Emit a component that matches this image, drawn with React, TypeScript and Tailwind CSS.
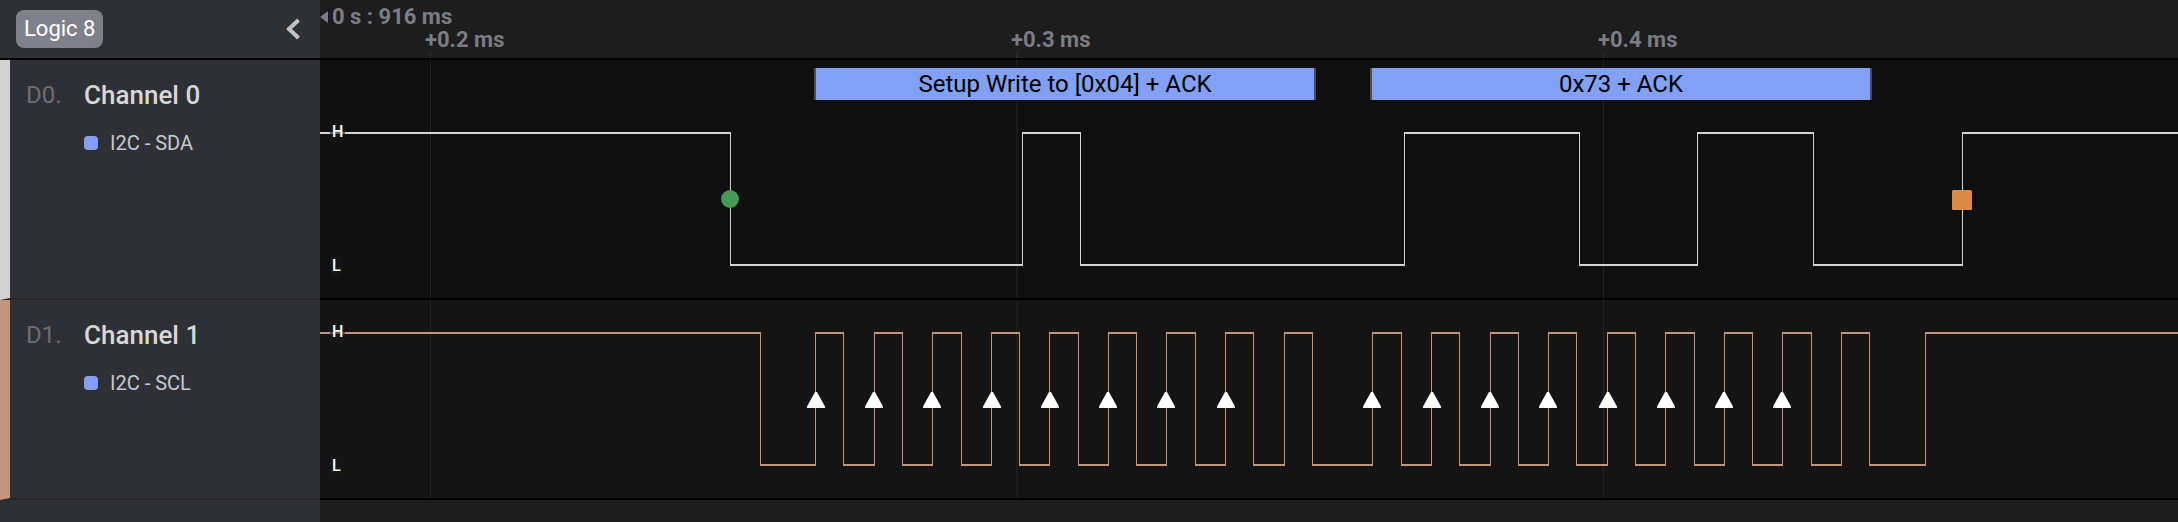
import React from "react";

const HIGH = 0;
const LOW = 132;
const FAR_RIGHT = 6000;

const ticks = [
  { label: "+0.2 ms", x: 110, width: 1 },
  { label: "+0.3 ms", x: 696, width: 2 },
  { label: "+0.4 ms", x: 1283, width: 1 },
];

const sdaEdges = [410, 702, 760, 1084, 1259, 1377, 1493, 1642];

const sclEdges = [
  440, 495, 523, 554, 582, 612, 641, 671, 699, 729, 758, 788, 816, 846, 875,
  905, 933, 964, 992, 1052, 1081, 1111, 1139, 1170, 1198, 1228, 1256, 1287,
  1315, 1345, 1374, 1404, 1432, 1462, 1491, 1521, 1549, 1605,
];

const sclSamples = [
  496, 554, 612, 672, 730, 788, 846, 906, 1052, 1112, 1170, 1228, 1288, 1346,
  1404, 1462,
];

const frames = [
  { text: "Setup Write to [0x04] + ACK", x: 494, width: 502 },
  { text: "0x73 + ACK", x: 1050, width: 502 },
];

function Wave({ edges, top, color }: { edges: number[]; top: number; color: string }) {
  let levels = "";
  let steps = "";
  let start = 0;
  let y = HIGH;
  for (const x of [...edges, FAR_RIGHT]) {
    levels += `M${start} ${top + y + 1}H${x + 1}`;
    if (x !== FAR_RIGHT) steps += `M${x + 0.5} ${top}V${top + LOW + 2}`;
    start = x;
    y = y === HIGH ? LOW : HIGH;
  }
  return (
    <g stroke={color} fill="none" shapeRendering="crispEdges">
      <path d={levels} strokeWidth={2} />
      <path d={steps} strokeWidth={1} />
    </g>
  );
}

function GridLines() {
  return (
    <g fill="#222222" shapeRendering="crispEdges">
      {ticks.map((t) => (
        <rect key={t.label} x={t.x} y={0} width={t.width} height="100%" fillOpacity={t.width === 2 ? 0.6 : 1} />
      ))}
    </g>
  );
}

function LevelLabels() {
  return (
    <div className="relative flex h-[156px] flex-col items-start justify-between pl-[10px] text-[16px] leading-[22px] font-medium text-white">
      <span className="rounded-[4px] bg-[#171717]/60 px-[2px]">H</span>
      <span className="rounded-[4px] bg-[#171717]/60 px-[2px]">L</span>
    </div>
  );
}

function ChannelInfo(props: { id: string; name: string; analyzer: string; className: string }) {
  return (
    <div
      className={`w-80 shrink-0 border-b-2 border-l-[10px] border-b-[#282828] bg-[#2f3036] pt-[19px] pl-4 ${props.className}`}
    >
      <div className="flex items-center leading-[32px]">
        <span className="w-[58px] text-[24px] text-[#6c6d73]">{props.id}</span>
        <h2 className="text-[26px] font-medium text-[#d6d7d9]">{props.name}</h2>
      </div>
      <div className="mt-[20px] flex items-center gap-3 pl-[58px] text-[20px] leading-[24px] text-[#c8c9cc]">
        <span className="size-[14px] rounded-[4px] bg-[#82a0f4]" />
        <span>{props.analyzer}</span>
      </div>
    </div>
  );
}

export default function App() {
  return (
    <main className="flex min-h-screen w-full flex-col overflow-hidden bg-[#1d1d1d] font-['Roboto',sans-serif]">
      <header className="flex h-[60px] border-b-2 border-black">
        <div className="flex w-80 shrink-0 items-start justify-between bg-[#2f3036] pt-[10px] pr-5 pl-4">
          <button type="button" className="h-[38px] rounded-lg bg-[#7f818a] px-2 text-[22px] leading-[38px] text-white">
            Logic 8
          </button>
          <button type="button" aria-label="Collapse sidebar" className="mt-[8px]">
            <svg className="block h-[22px] w-[14px]" viewBox="0 0 14 22" fill="none" stroke="#c3c4c8" strokeWidth="4">
              <path d="M12.5 2L3 11L12.5 20" />
            </svg>
          </button>
        </div>
        <div className="relative min-w-0 flex-1 overflow-hidden text-[22px] leading-[24px] font-bold text-[#7b7c84]">
          <div className="flex items-center gap-1 pt-[5px]">
            <svg className="h-[12px] w-[8px]" viewBox="0 0 8 12" fill="#7b7c84">
              <path d="M8 0V12L0 6Z" />
            </svg>
            <span>0 s : 916 ms</span>
          </div>
          {ticks.map((t) => (
            <div key={t.label} className="absolute top-[28px]" style={{ left: t.x }}>
              <span className="-ml-[5px] block whitespace-nowrap">{t.label}</span>
              <span className="block h-2 bg-[#2a2a2a]" style={{ width: t.width }} />
            </div>
          ))}
        </div>
      </header>

      <section className="flex h-[240px]">
        <ChannelInfo id="D0." name="Channel 0" analyzer="I2C - SDA" className="border-l-[#d3d3d3]" />
        <div className="relative min-w-0 flex-1 overflow-hidden border-b-2 border-black bg-[#0f0f0f] pt-[61px]">
          <svg className="absolute inset-0 size-full">
            <GridLines />
            <Wave edges={sdaEdges} top={72} color="#d3d3d3" />
            <circle cx={410} cy={139} r={9} fill="#449a56" />
            <rect x={1632} y={130} width={20} height={20} rx={1.5} fill="#db8a48" />
          </svg>
          {frames.map((f) => (
            <div
              key={f.text}
              className="absolute top-[8px] h-[32px] border-x-2 border-[#4c4c52] bg-[#82a0f4] text-center text-[24px] leading-[32px] whitespace-nowrap text-black"
              style={{ left: f.x, width: f.width }}
            >
              {f.text}
            </div>
          ))}
          <LevelLabels />
        </div>
      </section>

      <section className="flex h-[200px]">
        <ChannelInfo id="D1." name="Channel 1" analyzer="I2C - SCL" className="border-l-[#c2967c]" />
        <div className="relative min-w-0 flex-1 overflow-hidden border-b-2 border-black bg-[#141414] pt-[21px]">
          <svg className="absolute inset-0 size-full">
            <GridLines />
            <Wave edges={sclEdges} top={32} color="#c2967c" />
            {sclSamples.map((x) => (
              <path key={x} d={`M${x - 9} 108V106.5L${x - 1} 92H${x + 1}L${x + 9} 106.5V108Z`} fill="#ffffff" />
            ))}
          </svg>
          <LevelLabels />
        </div>
      </section>

      <div className="flex flex-1">
        <div className="w-80 shrink-0 bg-[#2f3036]" />
      </div>
    </main>
  );
}
